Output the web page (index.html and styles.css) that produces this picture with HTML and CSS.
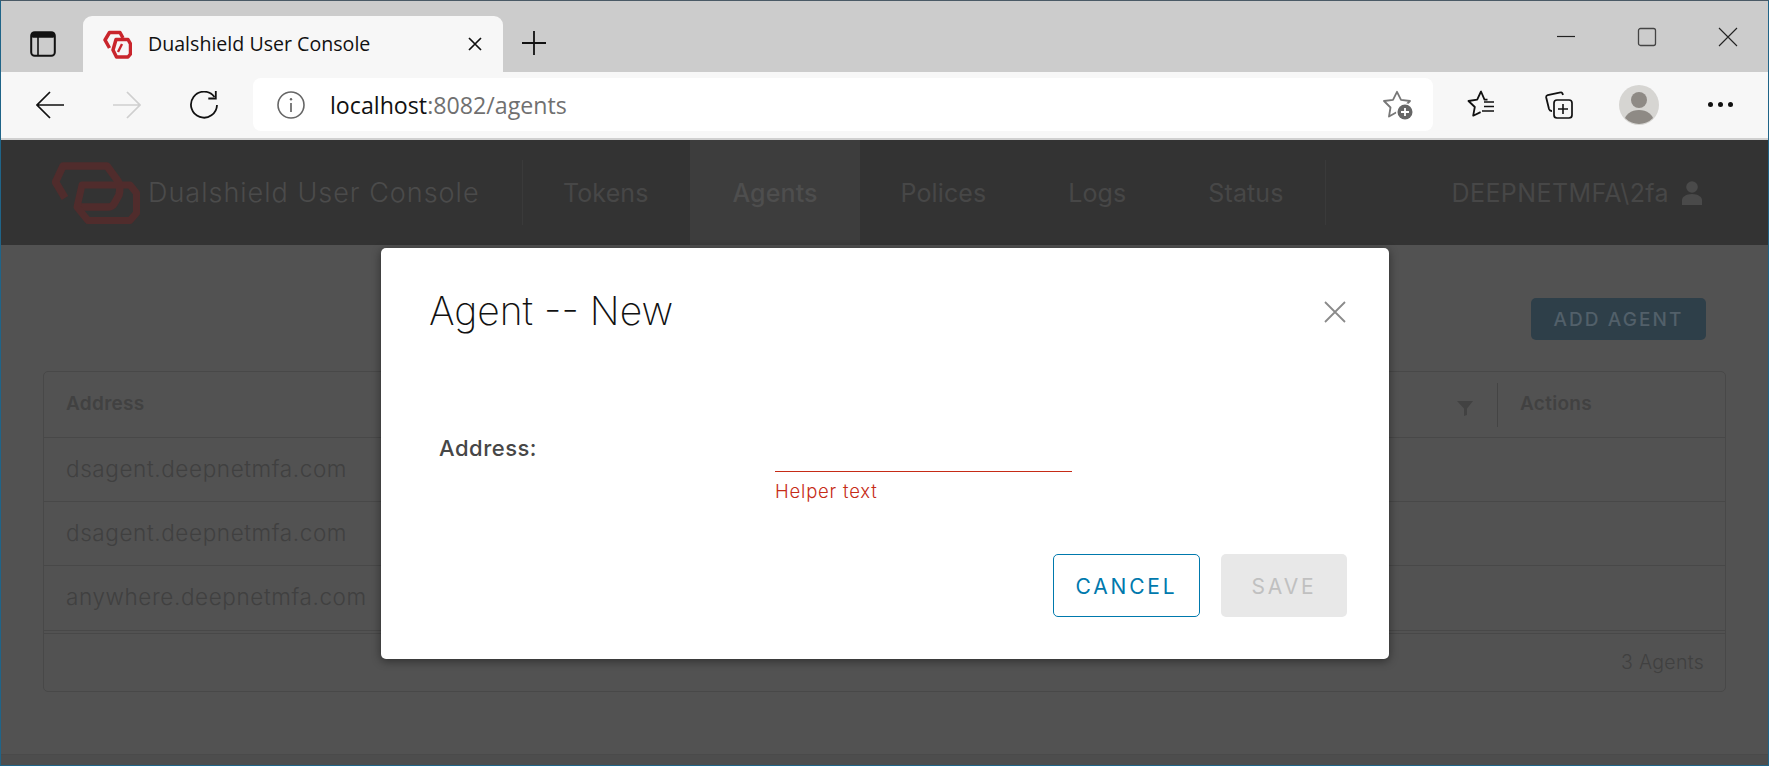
FILE: index.html
```html
<!DOCTYPE html>
<html lang="en">
<head>
<meta charset="utf-8">
<title>Dualshield User Console</title>
<link rel="stylesheet" href="styles.css">
</head>
<body>
<div class="window">
  <div class="tabstrip">
    <svg class="ic-side" viewBox="0 0 26 26"><rect x="1.2" y="1.2" width="23.6" height="23.6" rx="3.5" fill="none" stroke="#111" stroke-width="2"/><rect x="1.2" y="1.2" width="23.6" height="5.5" rx="2" fill="#111"/><path d="M8 6v18" stroke="#111" stroke-width="1.6"/></svg>
    <div class="tab">
      <svg class="ic-fav" viewBox="0 0 29 29"><path d="M6.500 18L2 10 6.500 2.500H17L20 8" fill="none" stroke="#c9252c" stroke-width="3.500" stroke-linejoin="round"/><path d="M13 9.500H25L27.500 14V24L25 27H13.500L10 20z" fill="none" stroke="#c9252c" stroke-width="3.500" stroke-linejoin="round"/><path d="M15 22l4-8" stroke="#c9252c" stroke-width="2.400"/></svg>
      <span class="tab-title">Dualshield User Console</span>
      <svg class="ic-tabx" viewBox="0 0 14 14"><path d="M1 1l12 12M13 1L1 13" stroke="#111" stroke-width="1.7"/></svg>
    </div>
    <svg class="ic-plus" viewBox="0 0 24 24"><path d="M12 0v24M0 12h24" stroke="#111" stroke-width="1.8"/></svg>
    <div class="winctl">
      <svg class="ic-win" viewBox="0 0 20 20"><path d="M1 9.500h18" stroke="#222" stroke-width="1.200"/></svg>
      <svg class="ic-win" viewBox="0 0 20 20"><rect x="1.500" y="1.500" width="17" height="17" rx="2" fill="none" stroke="#444" stroke-width="1.300"/></svg>
      <svg class="ic-win" viewBox="0 0 20 20"><path d="M1 1l18 18M19 1L1 19" stroke="#222" stroke-width="1.100"/></svg>
    </div>
  </div>
  <div class="toolbar">
    <svg class="ic-nav" viewBox="0 0 28 28"><path d="M28 14H1.500M14 1L1 14l13 13" fill="none" stroke="#111" stroke-width="1.700"/></svg>
    <svg class="ic-nav fwd" viewBox="0 0 28 28"><path d="M0 14h26.500M14 1l13 13-13 13" fill="none" stroke="#cfcfcf" stroke-width="1.700"/></svg>
    <svg class="ic-nav rel" viewBox="0 0 28 28"><path d="M24.500 6A13 13 0 1 0 27 14" fill="none" stroke="#111" stroke-width="1.800"/><path d="M25.800 0v7.500h-7.500" fill="none" stroke="#111" stroke-width="1.800"/></svg>
    <div class="addressbar">
      <svg class="ic-info" viewBox="0 0 28 28"><circle cx="14" cy="14" r="13" fill="none" stroke="#666" stroke-width="1.600"/><path d="M14 12v9" stroke="#666" stroke-width="1.700"/><circle cx="14" cy="8.200" r="1.200" fill="#666"/></svg>
      <span class="url"><span class="host">localhost</span>:8082/agents</span>
      <svg class="ic-staradd" viewBox="0 0 30 30"><path d="M14 1.800L18 9.800 27 11 20.500 17.500 22 26.500 14 22 6 26.500 7.500 17.500 1 11 10 9.800z" fill="none" stroke="#777" stroke-width="1.800" stroke-linejoin="round"/><circle cx="22" cy="22" r="9" fill="#fff"/><circle cx="22" cy="22" r="7.500" fill="#666"/><path d="M22 18v8M18 22h8" stroke="#fff" stroke-width="1.800"/></svg>
    </div>
    <svg class="ic-fl" viewBox="0 0 28 28"><path d="M20.500 9.700h-3L14 1.500 10.200 9.700 1.500 11l6.300 6-1.600 8.700 7.400-3.600" fill="none" stroke="#111" stroke-width="1.800" stroke-linejoin="round"/><path d="M17 12h10M17 16.500h10M15 21h12" stroke="#111" stroke-width="1.700"/></svg>
    <svg class="ic-coll" viewBox="0 0 28 28"><path d="M18 4l-.6-1.600a1.500 1.500 0 0 0-1.800-.9L2.700 4.200A2 2 0 0 0 1.200 6.500l2.800 11.500a3 3 0 0 0 3 2" fill="none" stroke="#111" stroke-width="1.800"/><rect x="9" y="9" width="18" height="18" rx="3" fill="none" stroke="#111" stroke-width="1.700"/><path d="M18 13v10M13 18h10" stroke="#111" stroke-width="1.600"/></svg>
    <svg class="ic-avatar" viewBox="0 0 40 40"><circle cx="20" cy="20" r="20" fill="#d6d5d2"/><clipPath id="ac"><circle cx="20" cy="20" r="19"/></clipPath><circle cx="20" cy="15" r="8" fill="#8e8a85"/><ellipse cx="20" cy="36" rx="14.500" ry="11" fill="#8e8a85" clip-path="url(#ac)"/></svg>
    <div class="dots"><i></i><i></i><i></i></div>
  </div>
  <div class="appbar">
    <div class="brand">
      <svg class="logo" viewBox="0 0 88 62"><path d="M13 36L3.500 20 11 4H55L66 19Q69 24 67 33L62 42Q60 45 56 45H26" fill="none" stroke="#502c2c" stroke-width="7.500" stroke-linejoin="round"/><path d="M30 23H78L84.500 31V51L78 58.500H36L25 45z" fill="none" stroke="#502c2c" stroke-width="7" stroke-linejoin="round"/></svg>
      <span class="brand-name">Dualshield User Console</span>
    </div>
    <nav class="nav">
      <span class="nav-item tokens">Tokens</span>
      <span class="nav-item active">Agents</span>
      <span class="nav-item">Polices</span>
      <span class="nav-item">Logs</span>
      <span class="nav-item">Status</span>
    </nav>
    <div class="user">
      <span class="user-name">DEEPNETMFA\2fa</span>
      <svg class="ic-user" viewBox="0 0 20 24"><circle cx="10" cy="6" r="5.800" fill="#4a4a4a"/><path d="M0 24v-5c0-3 4-6 10-6s10 3 10 6v5z" fill="#4a4a4a"/></svg>
    </div>
  </div>
  <main class="content">
    <div class="actions"><span class="btn-add">ADD AGENT</span></div>
    <div class="grid">
      <div class="grid-head">
        <span class="th">Address</span>
        <svg class="ic-filter" viewBox="0 0 16 16"><path d="M0 1h16L10 8.500V15l-3 1V8.500z" fill="#424242"/></svg>
        <i class="th-sep"></i>
        <span class="th th-actions">Actions</span>
      </div>
      <div class="grid-row"><span class="cell">dsagent.deepnetmfa.com</span></div>
      <div class="grid-row"><span class="cell">dsagent.deepnetmfa.com</span></div>
      <div class="grid-row last"><span class="cell">anywhere.deepnetmfa.com</span></div>
      <div class="grid-foot">3 Agents</div>
    </div>
  </main>
  <div class="pagefoot"></div>
  <section class="modal">
    <header class="modal-head">
      <h1 class="modal-title">Agent -- New</h1>
      <svg class="ic-close" viewBox="0 0 22 22"><path d="M1 1l20 20M21 1L1 21" stroke="#8a8a8a" stroke-width="1.800"/></svg>
    </header>
    <div class="form-row">
      <label class="form-label">Address:</label>
      <div class="field">
        <div class="field-line"></div>
        <div class="helper">Helper text</div>
      </div>
    </div>
    <footer class="modal-foot">
      <span class="btn btn-cancel">CANCEL</span>
      <span class="btn btn-save">SAVE</span>
    </footer>
  </section>
</div>
</body>
</html>
```
FILE: styles.css
```css
* { box-sizing: border-box; }
html, body { margin: 0; padding: 0; }
body { width: 1769px; height: 766px; overflow: hidden; font-family: Inter, "Open Sans", sans-serif; }
svg { display: block; flex: none; }

.window { position: relative; width: 1769px; height: 766px; display: flex; flex-direction: column; border: 1px solid #1f6488; border-top-color: #4a5a66; background: #525252; }

.tabstrip { height: 71px; flex: none; background: #cccccc; display: flex; align-items: flex-start; position: relative; }
.ic-side { width: 26px; height: 26px; margin: 30px 0 0 29px; }
.tab { width: 420px; height: 56px; margin: 15px 0 0 27px; background: #f7f7f7; border-radius: 9px 9px 0 0; display: flex; align-items: center; padding: 0 21px 0 20px; font-family: "Open Sans", sans-serif; }
.ic-fav { width: 29px; height: 29px; margin-top: 1px; }
.tab-title { margin-left: 16px; font-size: 19.600px; color: #111; flex: 1; white-space: nowrap; margin-top: -2px; }
.ic-tabx { width: 14px; height: 14px; margin-right: 0; }
.ic-plus { width: 24px; height: 24px; margin: 30px 0 0 19px; }
.winctl { margin-left: auto; display: flex; gap: 61px; margin-top: 26px; padding-right: 30px; }
.ic-win { width: 20px; height: 20px; }

.toolbar { height: 68px; flex: none; background: #f7f7f7; border-bottom: 2px solid #d0d0d0; display: flex; align-items: center; }
.ic-nav { width: 28px; height: 28px; margin-left: 35px; }
.ic-nav.fwd { margin-left: 49px; }
.ic-nav.rel { margin-left: 49px; margin-top: -1px; }
.addressbar { width: 1180px; height: 53px; margin: -1px 0 0 35px; background: #fff; border-radius: 8px; display: flex; align-items: center; padding: 0 20px 0 24px; font-family: "Open Sans", sans-serif; }
.ic-info { width: 28px; height: 28px; }
.url { margin-left: 25px; font-size: 23.200px; color: #707070; flex: 1; white-space: nowrap; }
.host { color: #111; }
.ic-staradd { width: 30px; height: 30px; }
.ic-fl { width: 28px; height: 28px; margin-left: 34px; margin-top: -2px; }
.ic-coll { width: 28px; height: 28px; margin-left: 50px; margin-top: -1px; }
.ic-avatar { width: 40px; height: 40px; margin-left: 46px; }
.dots { display: flex; gap: 5px; margin-left: 49px; margin-top: -1px; }
.dots i { width: 5px; height: 5px; background: #111; border-radius: 50%; }

.appbar { height: 105px; flex: none; background: #333333; color: #474747; display: flex; }
.brand { width: 521px; display: flex; align-items: center; padding-left: 51px; }
.logo { width: 88px; height: 62px; }
.brand-name { margin-left: 8px; white-space: nowrap; font-size: 27px; letter-spacing: 1px; font-weight: 300; color: #4b4b4b; }
.nav { width: 804px; display: flex; position: relative; border-left: 1px solid #3a3a3a; border-right: 1px solid #3a3a3a; margin: 20px 0; }
.nav-item { display: flex; align-items: center; padding: 0 41px; height: 105px; margin-top: -20px; white-space: nowrap; font-size: 25px; letter-spacing: 0.1px; }
.nav-item.tokens { padding: 0 42px 0 40px; }
.nav-item.active { background: #3d3d3d; color: #4e4e4e; font-weight: 500; padding: 0 42px 0 42px; }
.user { flex: 1; display: flex; align-items: center; justify-content: flex-end; padding-right: 66px; gap: 13px; }
.user-name { font-size: 25px; letter-spacing: 0.4px; white-space: nowrap; }
.ic-user { width: 20px; height: 24px; }

.content { flex: 1; padding: 0 42px; display: flex; flex-direction: column; }
.actions { height: 126px; display: flex; justify-content: flex-end; padding: 53px 20px 0 0; }
.btn-add { width: 175px; height: 42px; background: #2e3f49; border-radius: 5px; color: #52606a; font-size: 19px; font-weight: 500; letter-spacing: 2.100px; display: flex; align-items: center; justify-content: center; }
.grid { height: 321px; border: 1px solid #484848; border-radius: 5px; color: #404040; font-weight: 300; }
.grid-head { height: 66px; display: flex; align-items: center; border-bottom: 1px solid #484848; padding-left: 22px; font-size: 19px; font-weight: 600; letter-spacing: 0.3px; }
.th { color: #414141; margin-top: -2px; }
.ic-filter { width: 16px; height: 16px; margin-left: auto; margin-top: 7px; }
.th-sep { width: 1px; height: 44px; background: #444; margin: 0 22px 0 24px; }
.th-actions { width: 205px; }
.grid-row { height: 64px; display: flex; align-items: center; padding-left: 22px; border-bottom: 1px solid #484848; font-size: 22.500px; letter-spacing: 0.6px; }
.cell { margin-top: -3px; }
.grid-row.last { height: 65px; }
.grid-foot { margin-top: 2px; height: 57px; border-top: 1px solid #484848; display: flex; align-items: center; justify-content: flex-end; padding-right: 21px; font-size: 19.500px; letter-spacing: 0.3px; }
.pagefoot { height: 11px; flex: none; background: #4d4d4d; border-top: 1px solid #4a4a4a; }

.modal { position: absolute; left: 380px; top: 247px; width: 1008px; height: 411px; background: #fff; border-radius: 5px; box-shadow: 0 2px 10px rgba(0,0,0,.45); padding: 0 42px 0 48px; display: flex; flex-direction: column; }
.modal-head { height: 128px; display: flex; align-items: center; justify-content: space-between; }
.modal-title { margin: -4px 0 0 0; font-size: 39px; font-weight: 200; color: #111; }
.ic-close { width: 22px; height: 22px; margin-right: 1px; }
.form-row { display: flex; height: 178px; padding: 60px 0 0 10px; }
.form-label { width: 336px; font-size: 22px; font-weight: 500; letter-spacing: 0.5px; color: #474747; line-height: 24px; }
.field { width: 297px; padding-top: 35px; }
.field-line { height: 1px; background: #c62b16; }
.helper { margin-top: 8px; font-size: 18.500px; font-weight: 300; color: #c62b16; letter-spacing: 0.800px; }
.modal-foot { display: flex; justify-content: flex-end; gap: 21px; }
.btn { height: 63px; border-radius: 5px; display: flex; align-items: center; justify-content: center; font-size: 21px; letter-spacing: 2.800px; font-weight: 400; padding-top: 2px; }
.btn-cancel { width: 147px; border: 1px solid #0079ad; color: #0079ad; }
.btn-save { width: 126px; background: #e8e8e8; color: #c0c0c0; }
```
